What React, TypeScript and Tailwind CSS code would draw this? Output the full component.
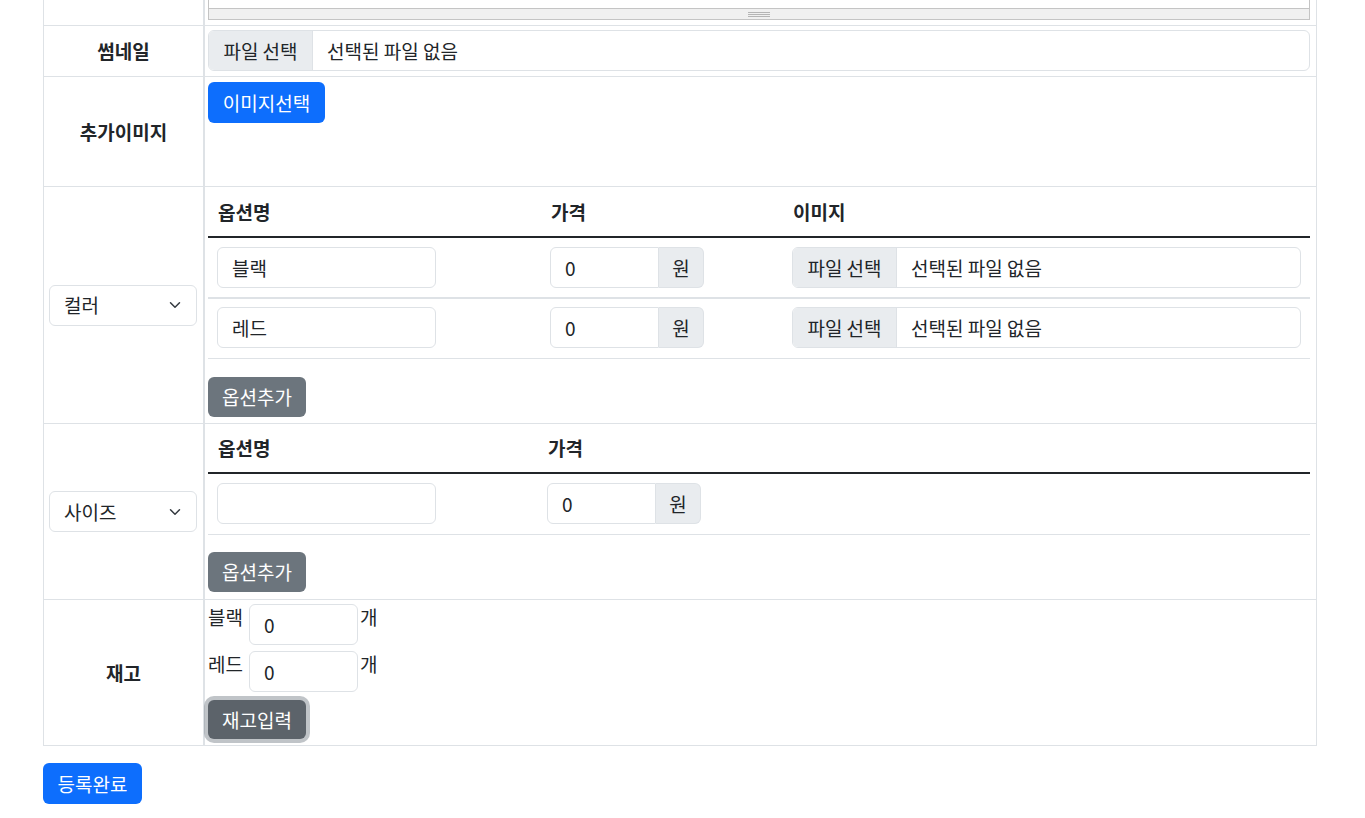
import React from "react"

const font = { fontFamily: '"Noto Sans CJK KR", "Noto Sans", sans-serif' }

function FileInput({ className = "" }: { className?: string }) {
  return (
    <div className={`flex h-[41px] rounded-[6px] border border-[#dee2e6] overflow-hidden bg-white ${className}`}>
      <div className="w-[104px] shrink-0 flex items-center justify-center bg-[#e9ecef] border-r border-[#dee2e6] text-[#212529]">
        파일 선택
      </div>
      <div className="flex items-center pl-[14px] text-[#212529]">선택된 파일 없음</div>
    </div>
  )
}

function TextBox({ value, className = "" }: { value: string; className?: string }) {
  return (
    <div className={`h-[41px] rounded-[6px] border border-[#dee2e6] bg-white flex items-center pl-[14px] text-[#212529] ${className}`}>
      {value}
    </div>
  )
}

function PriceGroup() {
  return (
    <div className="flex h-[41px] w-[154px]">
      <div className="w-[109px] rounded-l-[6px] border border-[#dee2e6] flex items-center pl-[14px] text-[#212529]">0</div>
      <div className="flex-1 rounded-r-[6px] border border-l-0 border-[#dee2e6] bg-[#e9ecef] flex items-center justify-center text-[#212529]">
        원
      </div>
    </div>
  )
}

function SelectBox({ label }: { label: string }) {
  return (
    <div className="w-[148px] h-[41px] rounded-[6px] border border-[#dee2e6] bg-white flex items-center justify-between pl-[14px] pr-[13px] text-[#212529]">
      <span>{label}</span>
      <svg width="16" height="12" viewBox="0 0 16 16" fill="none">
        <path d="m2 5 6 6 6-6" stroke="#343a40" strokeWidth="2" strokeLinecap="round" strokeLinejoin="round" />
      </svg>
    </div>
  )
}

function GrayButton({ children, className = "" }: { children: React.ReactNode; className?: string }) {
  return (
    <button className={`w-[98px] h-[40px] rounded-[6px] bg-[#6c757d] text-white ${className}`}>{children}</button>
  )
}

function Row({ label, children, leftClass = "justify-center font-bold", rightClass = "" }: {
  label: React.ReactNode
  children: React.ReactNode
  leftClass?: string
  rightClass?: string
}) {
  return (
    <div className="flex border-b border-[#dee2e6]">
      <div className={`w-[162px] shrink-0 border-l border-r-2 border-[#dee2e6] flex items-center text-[#212529] ${leftClass}`}>
        {label}
      </div>
      <div className={`flex-1 border-r border-[#dee2e6] pl-[3px] pr-[6px] ${rightClass}`}>{children}</div>
    </div>
  )
}

export default function App() {
  return (
    <div className="bg-white min-h-[818px] text-[19px] leading-[24px] text-[#212529]" style={font}>
      <div className="ml-[43px] w-[1274px]">
        {/* editor bottom, page is scrolled */}
        <Row label="" rightClass="pb-[5px]">
          <div className="border-x border-b border-[#c4c4c4]">
            <div className="h-[8px] bg-white" />
            <div className="h-[11px] border-t border-[#c4c4c4] bg-[#f0f0f0] flex flex-col items-center justify-center gap-[1px]">
              <div className="w-[22px] h-px bg-[#b5b5b5]" />
              <div className="w-[22px] h-px bg-[#b5b5b5]" />
              <div className="w-[22px] h-px bg-[#b5b5b5]" />
            </div>
          </div>
        </Row>

        <Row label="썸네일" rightClass="pt-[4px] pb-[5px]">
          <FileInput />
        </Row>

        <Row label="추가이미지" rightClass="pt-[5px] h-[109px]">
          <button className="w-[117px] h-[41px] rounded-[6px] bg-[#0d6efd] text-white">이미지선택</button>
        </Row>

        <Row label={<SelectBox label="컬러" />} leftClass="pl-[5px]" rightClass="pb-[6px]">
          <div className="grid grid-cols-[333px_242px_1fr]">
            <div className="h-[49px] flex items-center pl-[10px] font-bold">옵션명</div>
            <div className="h-[49px] flex items-center pl-[10px] font-bold">가격</div>
            <div className="h-[49px] flex items-center pl-[10px] font-bold">이미지</div>
          </div>
          <div className="h-[2px] bg-[#212529]" />
          <div className="grid grid-cols-[333px_242px_1fr] border-b-2 border-[#dee2e6] pt-[9px] pb-[9px]">
            <div className="pl-[9px]"><TextBox value="블랙" className="w-[219px]" /></div>
            <div className="pl-[9px]"><PriceGroup /></div>
            <div className="pl-[9px] pr-[9px]"><FileInput /></div>
          </div>
          <div className="grid grid-cols-[333px_242px_1fr] border-b border-[#dee2e6] pt-[8px] pb-[10px]">
            <div className="pl-[9px]"><TextBox value="레드" className="w-[219px]" /></div>
            <div className="pl-[9px]"><PriceGroup /></div>
            <div className="pl-[9px] pr-[9px]"><FileInput /></div>
          </div>
          <GrayButton className="mt-[18px]">옵션추가</GrayButton>
        </Row>

        <Row label={<SelectBox label="사이즈" />} leftClass="pl-[5px]" rightClass="pb-[7px]">
          <div className="grid grid-cols-[330px_1fr]">
            <div className="h-[48px] flex items-center pl-[10px] font-bold">옵션명</div>
            <div className="h-[48px] flex items-center pl-[10px] font-bold">가격</div>
          </div>
          <div className="h-[2px] bg-[#212529]" />
          <div className="grid grid-cols-[330px_1fr] border-b border-[#dee2e6] pt-[9px] pb-[10px]">
            <div className="pl-[9px]"><TextBox value="" className="w-[219px]" /></div>
            <div className="pl-[9px]"><PriceGroup /></div>
          </div>
          <GrayButton className="mt-[17px]">옵션추가</GrayButton>
        </Row>

        <Row label="재고" rightClass="pt-[4px] pb-[6px]">
          <div className="flex flex-col gap-[6px]">
            {["블랙", "레드"].map((name) => (
              <div key={name} className="flex items-start">
                <span className="pt-[1px]">{name}</span>
                <TextBox value="0" className="w-[109px] ml-[6px]" />
                <span className="ml-[2px] pt-[1px]">개</span>
              </div>
            ))}
          </div>
          <button className="mt-[8px] w-[98px] h-[39px] rounded-[6px] bg-[#5c636a] text-white shadow-[0_0_0_4px_rgba(130,138,145,0.5)]">
            재고입력
          </button>
        </Row>

        <button className="mt-[17px] w-[99px] h-[41px] rounded-[6px] bg-[#0d6efd] text-white">등록완료</button>
      </div>
    </div>
  )
}
